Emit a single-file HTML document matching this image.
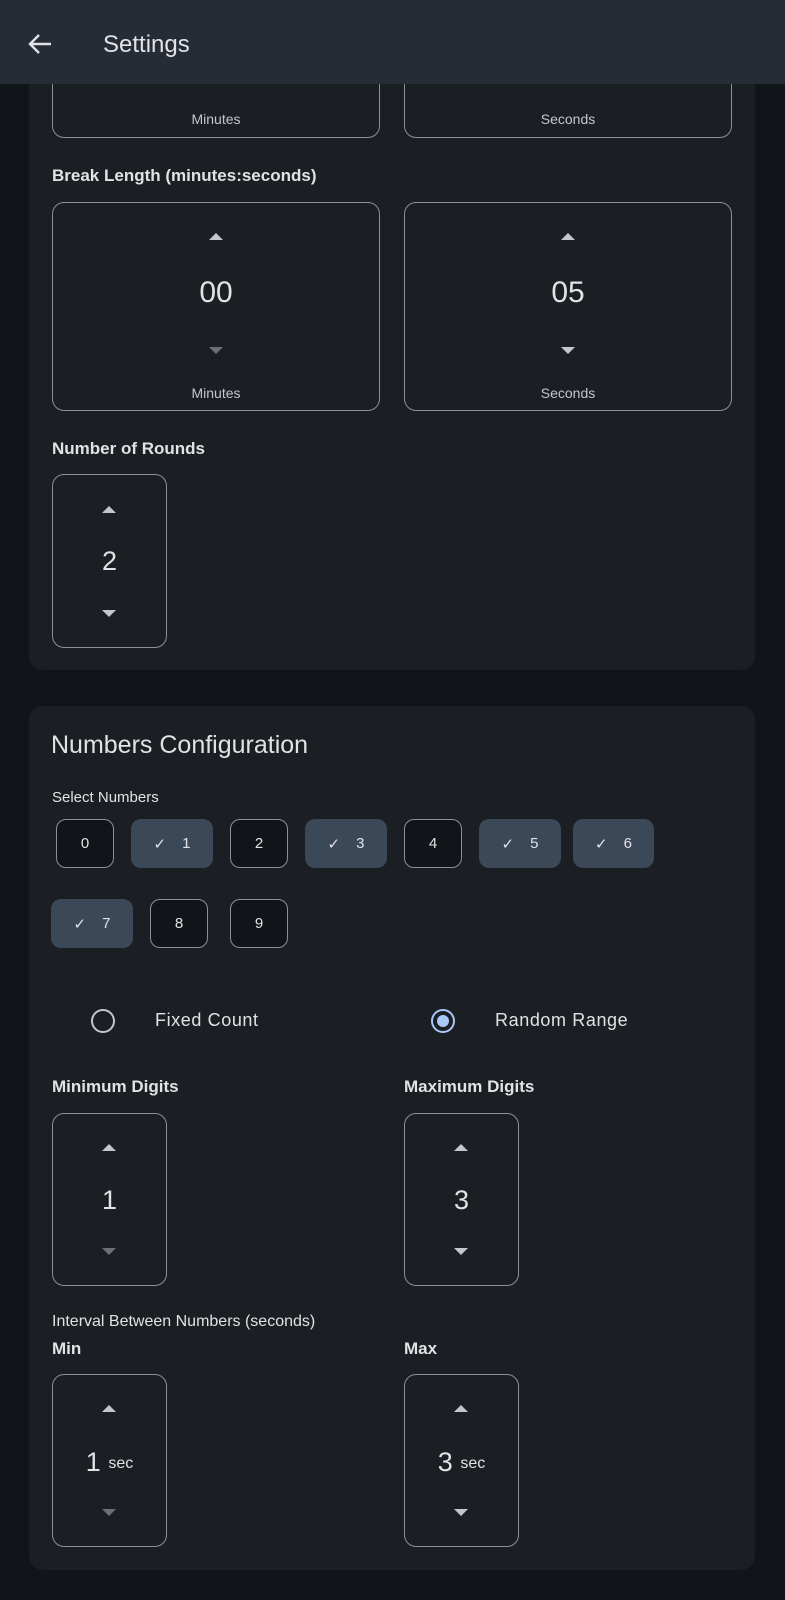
<!DOCTYPE html>
<html><head><meta charset="utf-8"><style>
*{margin:0;padding:0;box-sizing:border-box}
body{width:785px;height:1600px;background:#111418;font-family:"Liberation Sans",Roboto,sans-serif;color:#e2e2e6;position:relative;overflow:hidden}
.a{position:absolute}
.hdr{left:0;top:0;width:785px;height:84px;background:#262c35}
.card{background:#1b1e22;border-radius:14px;left:29px;width:726px}
.box{position:absolute;border:1.5px solid #8d9096;border-radius:12px}
.lbl{font-size:17px;font-weight:bold;color:#e2e2e6}
.up,.dn{position:absolute;width:0;height:0;border-left:7px solid transparent;border-right:7px solid transparent}
.up{border-bottom:7px solid #c4c6cc}
.dn{border-top:7px solid #c4c6cc}
.dim{border-top-color:#6c6f75}
.val{position:absolute;text-align:center;font-size:30px;color:#e2e2e6;line-height:30px}
.sub{position:absolute;text-align:center;font-size:14px;color:#c4c6cc}
.chip{position:absolute;top:0;height:49px;border-radius:10px;font-size:15px;display:flex;align-items:center;justify-content:center;color:#e2e2e6}
.off{border:1.5px solid #8d9096;background:#111418}
.on{background:#3b4858}
.on span.c{margin-right:16px;font-size:15px}
</style></head><body>
<div class="a card" style="top:-20px;height:690px"></div>
<div class="a card" style="top:706px;height:864px"></div>

<div class="box" style="left:52px;top:60px;width:328px;height:78px"></div>
<div class="box" style="left:404px;top:60px;width:328px;height:78px"></div>
<div class="a hdr"></div>
<svg class="a" style="left:27px;top:32px" width="26" height="24" viewBox="0 0 26 24"><path d="M24 12H4M12 3L3 12l9 9" fill="none" stroke="#e2e2e6" stroke-width="2.4"/></svg>
<div class="a" style="left:103px;top:31px;font-size:24px;color:#e2e2e6">Settings</div>
<div class="sub" style="left:52px;width:328px;top:111px">Minutes</div>
<div class="sub" style="left:404px;width:328px;top:111px">Seconds</div>

<div class="a lbl" style="left:52px;top:166px">Break Length (minutes:seconds)</div>
<div class="box" style="left:52px;top:202px;width:328px;height:209px"></div>
<div class="box" style="left:404px;top:202px;width:328px;height:209px"></div>
<div class="up" style="left:209px;top:233px"></div>
<div class="up" style="left:561px;top:233px"></div>
<div class="val" style="left:52px;width:328px;top:278px">00</div>
<div class="val" style="left:404px;width:328px;top:278px">05</div>
<div class="dn dim" style="left:209px;top:347px"></div>
<div class="dn" style="left:561px;top:347px"></div>
<div class="sub" style="left:52px;width:328px;top:385px">Minutes</div>
<div class="sub" style="left:404px;width:328px;top:385px">Seconds</div>

<div class="a lbl" style="left:52px;top:439px">Number of Rounds</div>
<div class="box" style="left:52px;top:474px;width:115px;height:174px"></div>
<div class="up" style="left:102px;top:506px"></div>
<div class="val" style="left:52px;width:115px;top:546px;font-size:27px">2</div>
<div class="dn" style="left:102px;top:610px"></div>

<div class="a" style="left:51px;top:731px;font-size:25px;color:#e2e2e6">Numbers Configuration</div>
<div class="a" style="left:52px;top:789px;font-size:15px">Select Numbers</div>
<div class="a" style="left:0;top:819px;width:785px;height:49px">
<div class="chip off" style="left:56px;width:58px">0</div>
<div class="chip on" style="left:131px;width:82px"><span class="c">✓</span>1</div>
<div class="chip off" style="left:230px;width:58px">2</div>
<div class="chip on" style="left:305px;width:82px"><span class="c">✓</span>3</div>
<div class="chip off" style="left:404px;width:58px">4</div>
<div class="chip on" style="left:479px;width:82px"><span class="c">✓</span>5</div>
<div class="chip on" style="left:573px;width:81px"><span class="c">✓</span>6</div>
</div>
<div class="a" style="left:0;top:899px;width:785px;height:49px">
<div class="chip on" style="left:51px;width:82px"><span class="c">✓</span>7</div>
<div class="chip off" style="left:150px;width:58px">8</div>
<div class="chip off" style="left:230px;width:58px">9</div>
</div>

<div class="a" style="left:91px;top:1009px;width:24px;height:24px;border:2.5px solid #c4c6cc;border-radius:50%"></div>
<div class="a" style="left:155px;top:1010px;font-size:18px;color:#e2e2e6;letter-spacing:0.6px">Fixed Count</div>
<div class="a" style="left:431px;top:1009px;width:24px;height:24px;border:2.5px solid #a8c8f8;border-radius:50%"></div>
<div class="a" style="left:437px;top:1015px;width:12px;height:12px;background:#a8c8f8;border-radius:50%"></div>
<div class="a" style="left:495px;top:1010px;font-size:18px;color:#e2e2e6;letter-spacing:0.6px">Random Range</div>

<div class="a lbl" style="left:52px;top:1077px">Minimum Digits</div>
<div class="a lbl" style="left:404px;top:1077px">Maximum Digits</div>
<div class="box" style="left:52px;top:1113px;width:115px;height:173px"></div>
<div class="box" style="left:404px;top:1113px;width:115px;height:173px"></div>
<div class="up" style="left:102px;top:1144px"></div>
<div class="up" style="left:454px;top:1144px"></div>
<div class="val" style="left:52px;width:115px;top:1185px;font-size:27px">1</div>
<div class="val" style="left:404px;width:115px;top:1185px;font-size:27px">3</div>
<div class="dn dim" style="left:102px;top:1248px"></div>
<div class="dn" style="left:454px;top:1248px"></div>

<div class="a" style="left:52px;top:1313px;font-size:16px;color:#e2e2e6">Interval Between Numbers (seconds)</div>
<div class="a lbl" style="left:52px;top:1339px">Min</div>
<div class="a lbl" style="left:404px;top:1339px">Max</div>
<div class="box" style="left:52px;top:1374px;width:115px;height:173px"></div>
<div class="box" style="left:404px;top:1374px;width:115px;height:173px"></div>
<div class="up" style="left:102px;top:1405px"></div>
<div class="up" style="left:454px;top:1405px"></div>
<div class="val" style="left:52px;width:115px;top:1447px;font-size:27px">1 <span style="font-size:16px;vertical-align:3px">sec</span></div>
<div class="val" style="left:404px;width:115px;top:1447px;font-size:27px">3 <span style="font-size:16px;vertical-align:3px">sec</span></div>
<div class="dn dim" style="left:102px;top:1509px"></div>
<div class="dn" style="left:454px;top:1509px"></div>
</body></html>
